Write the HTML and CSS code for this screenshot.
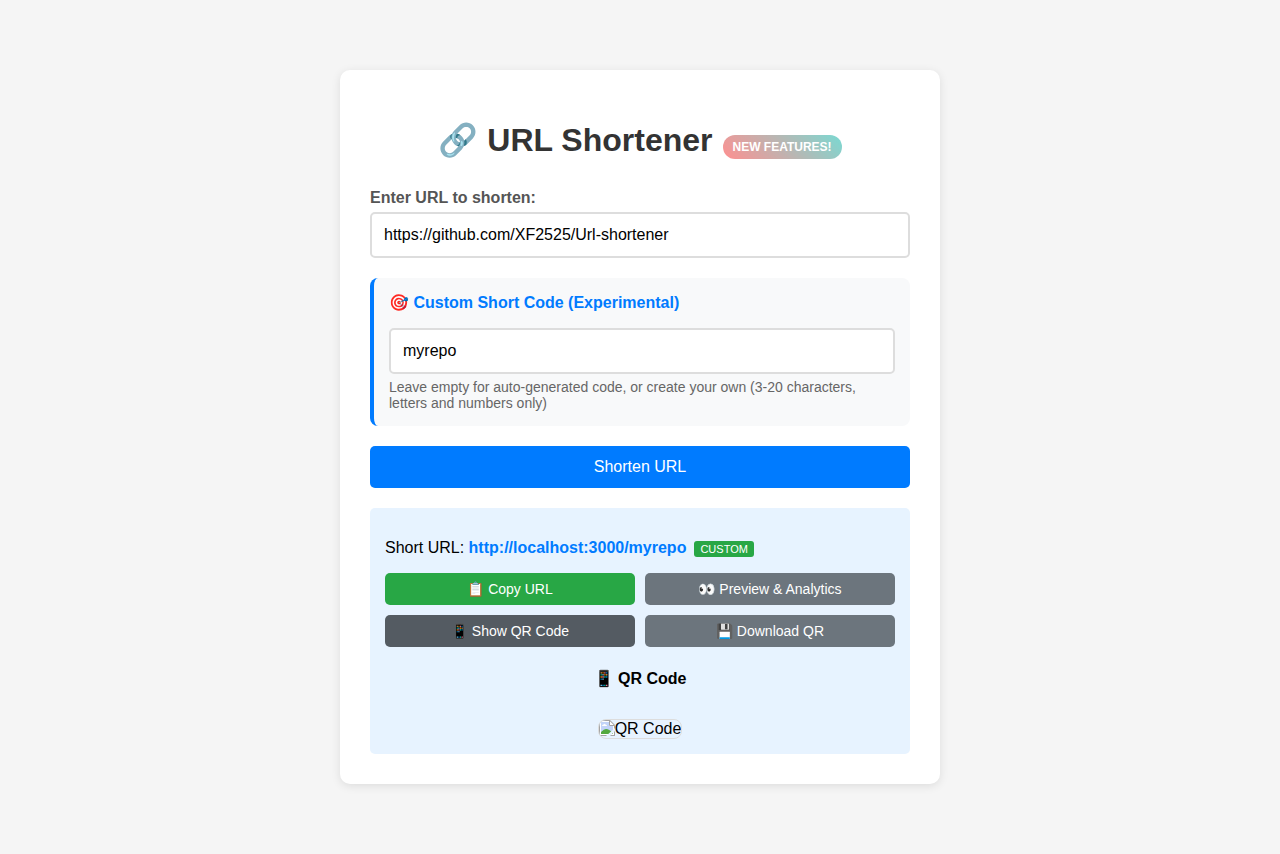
FILE: index.html
```html
<!DOCTYPE html>
<html lang="en">
<head>
<meta charset="utf-8">
<title>URL Shortener</title>
<link rel="stylesheet" href="styles.css">
</head>
<body>
<main class="container">
  <h1>🔗 URL Shortener<span class="feature-badge">NEW FEATURES!</span></h1>
  <form class="shorten-form">
    <div class="form-group">
      <label for="url">Enter URL to shorten:</label>
      <input type="url" id="url" value="https://github.com/XF2525/Url-shortener">
    </div>
    <div class="custom-section">
      <label class="custom-title" for="code">🎯 Custom Short Code (Experimental)</label>
      <input type="text" id="code" value="myrepo">
      <div class="help-text">Leave empty for auto-generated code, or create your own (3-20 characters, letters and numbers only)</div>
    </div>
    <button type="submit" class="submit">Shorten URL</button>
  </form>
  <section class="result">
    <p>Short URL: <a class="short-url" href="#">http://localhost:3000/myrepo</a><span class="custom-badge">CUSTOM</span></p>
    <div class="actions">
      <button type="button" class="action copy">📋 Copy URL</button>
      <button type="button" class="action">👀 Preview &amp; Analytics</button>
      <button type="button" class="action active">📱 Show QR Code</button>
      <button type="button" class="action">💾 Download QR</button>
    </div>
    <div class="qr">
      <h4>📱 QR Code</h4>
      <span class="qr-image"><svg class="broken" width="16" height="16" viewBox="0 0 16 16" aria-hidden="true"><path d="M0 0h11l5 5v11H0z" fill="#a3a3a3"/><path d="M1 1h9.500L15 5.500V15H1z" fill="#fff"/><path d="M2 2h8v4h4v8H2z" fill="#c2d4f8"/><path d="M10.500 1v4.500H15" fill="#fff" stroke="#a3a3a3"/><path d="M3 6q0-1.500 1.500-1.500 1-1.500 2 0 1.500 0 1.500 1.500z" fill="#fff"/><path d="M2 14v-2q3-3 5-3 3 0 7 4v1z" fill="#53a93f"/><path d="M7 16l9-8v3l-5 5z" fill="#e7f3ff"/></svg>QR Code</span>
    </div>
  </section>
</main>
</body>
</html>
```

FILE: styles.css
```css
* { box-sizing: border-box; }
body {
  margin: 0;
  min-height: 100vh;
  display: flex;
  align-items: center;
  justify-content: center;
  background: #f5f5f5;
  font-family: "Liberation Sans", Arial, sans-serif;
  font-size: 16px;
  color: #000;
}
.container {
  width: 100%;
  max-width: 600px;
  padding: 30px;
  background: #fff;
  border-radius: 10px;
  box-shadow: 0 2px 10px rgba(0, 0, 0, 0.1);
}
h1 {
  margin: 21px 0 30px;
  color: #333;
  font-size: 32px;
  text-align: center;
}
.feature-badge {
  display: inline-block;
  margin-left: 10px;
  padding: 5px 10px;
  border-radius: 15px;
  background: linear-gradient(45deg, #ff6b6b, #4ecdc4);
  color: #fff;
  font-size: 12px;
  opacity: 0.75;
}
.form-group { margin-bottom: 20px; }
label {
  display: block;
  margin-bottom: 5px;
  color: #555;
  font-weight: bold;
}
input {
  display: block;
  width: 100%;
  padding: 12px;
  border: 2px solid #ddd;
  border-radius: 5px;
  background: #fff;
  color: #000;
  font-family: inherit;
  font-size: 16px;
}
.custom-section {
  margin-bottom: 20px;
  padding: 15px;
  border-left: 4px solid #007bff;
  border-radius: 8px;
  background: #f8f9fa;
}
.custom-title { margin-bottom: 16px; color: #007bff; }
.help-text { margin-top: 5px; color: #666; font-size: 14px; }
button {
  border: 0;
  border-radius: 5px;
  color: #fff;
  font-family: inherit;
  cursor: pointer;
}
.submit { width: 100%; padding: 12px; background: #007bff; font-size: 16px; }
.result {
  margin-top: 20px;
  padding: 15px;
  border-radius: 5px;
  background: #e7f3ff;
}
.result p { margin: 16px 0; }
.short-url { color: #007bff; font-weight: bold; text-decoration: none; }
.custom-badge {
  display: inline-block;
  margin-left: 8px;
  padding: 2px 6px;
  border-radius: 3px;
  background: #28a745;
  color: #fff;
  font-size: 11px;
}
.actions { display: grid; grid-template-columns: 1fr 1fr; gap: 10px; }
.action { padding: 8px; background: #6c757d; font-size: 14px; }
.copy { background: #28a745; }
.active { background: #545b62; }
.qr { margin-top: 22px; text-align: center; }
.qr h4 { margin: 0 0 31px; font-size: 16px; }
.qr-image {
  display: inline-block;
  border: 1px solid #ddd;
  border-radius: 8px;
  overflow: hidden;
  vertical-align: bottom;
}
.broken { vertical-align: top; }
```
